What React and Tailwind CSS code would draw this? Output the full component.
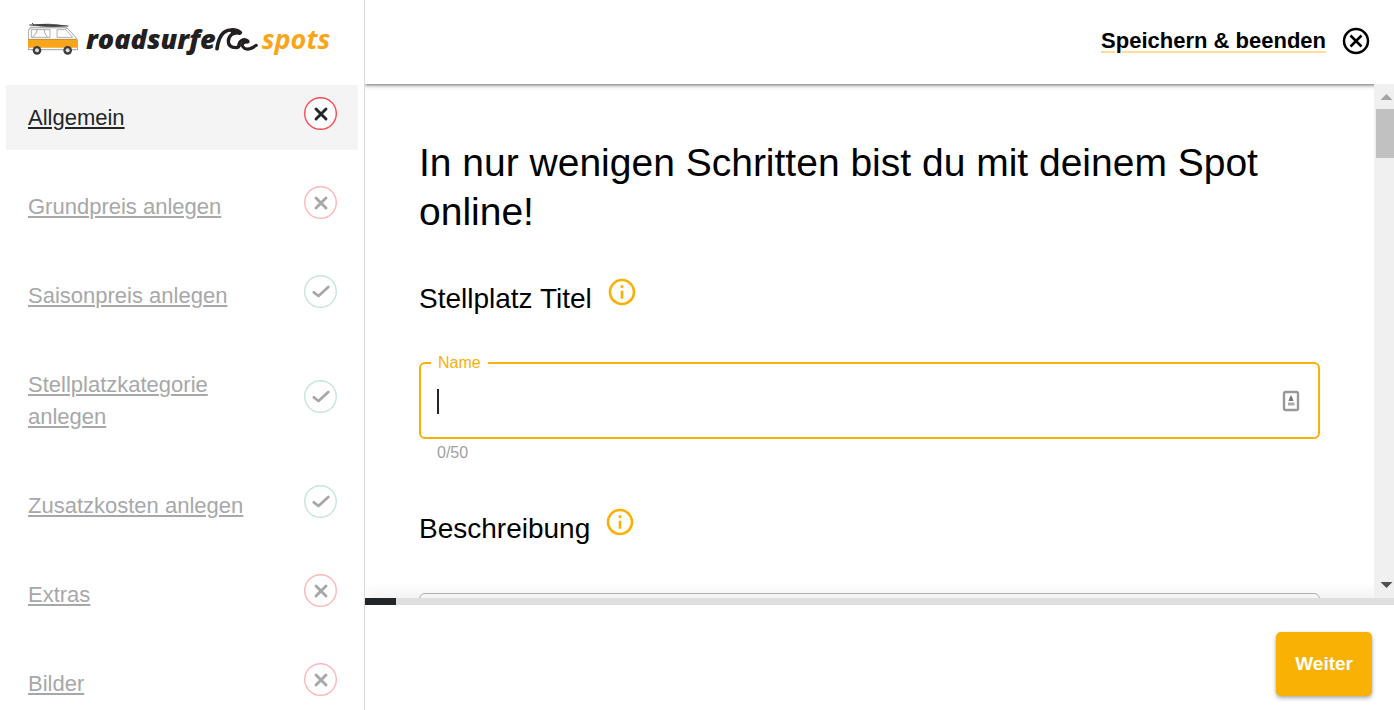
import React, { useState } from "react";

const STEPS = [
  { label: "Allgemein", done: false, active: true },
  { label: "Grundpreis anlegen", done: false },
  { label: "Saisonpreis anlegen", done: true },
  { label: "Stellplatzkategorie anlegen", done: true },
  { label: "Zusatzkosten anlegen", done: true },
  { label: "Extras", done: false },
  { label: "Bilder", done: false },
];

function VanIcon() {
  return (
    <svg viewBox="0 0 150 96" className="h-8 w-[50px] shrink-0" aria-hidden="true">
      <path d="M1 48 V26 Q1 16 10 14 H112 Q120 15 126 24 L144 44 Q149 50 149 60 V80 H1 Z" fill="#fff" stroke="#8a8a8a" strokeWidth="2.500" />
      <path d="M8 11 H116 L120 16 H4 Z" fill="#b5b5b5" />
      <path d="M0 49 H145 Q149 54 149 62 V74 H0 Z" fill="#f9a51a" />
      <path d="M10 20 H66 V43 H10 Z M87 20 H114 L134 43 H87 Z" fill="#fff" stroke="#888" strokeWidth="2" />
      <path d="M28 20 Q26 33 14 42 M48 20 Q50 34 58 42" fill="none" stroke="#777" strokeWidth="2" />
      <path d="M4 6 Q60 -1 121 9 Q60 14 4 6 Z" fill="#444" stroke="#333" strokeWidth="1.500" />
      <path d="M12 0 L18 6" stroke="#444" strokeWidth="3" />
      <path d="M2 49 H145" stroke="#9a7433" strokeWidth="2" />
      <circle cx="27" cy="82" r="13" fill="#3d3d3d" />
      <circle cx="27" cy="82" r="6" fill="#ddd" />
      <circle cx="119" cy="82" r="13" fill="#3d3d3d" />
      <circle cx="119" cy="82" r="6" fill="#ddd" />
    </svg>
  );
}

function WaveIcon() {
  return (
    <svg viewBox="0 -4 138 96" className="-ml-[2px] h-8 w-[46px] shrink-0" aria-hidden="true">
      <g fill="none" stroke="#231f20" strokeLinecap="round" strokeLinejoin="round">
        <path d="M9 73 C13 44 22 18 50 17 C62 16 72 19 79 25" strokeWidth="11" />
        <path d="M76 26 C56 22 43 36 43 51 C43 65 52 70 66 70 C72 70 75 68 75 63" strokeWidth="10" />
        <path d="M75 64 C75 50 89 41 101 50" strokeWidth="10" />
        <path d="M99 53 C87 53 82 61 87 68 C96 79 113 73 127 63" strokeWidth="9" />
      </g>
      <path d="M48 19 L81 21 Q86 28 77 32 Q66 26 54 32 Z M88 44 Q104 42 107 52 Q106 58 100 57 Q92 52 84 60 Z" fill="#231f20" />
    </svg>
  );
}

function StatusIcon({ done, active }) {
  const ring = done ? "#c5e6df" : active ? "#fb4b52" : "#fdb7ba";
  return (
    <svg viewBox="0 0 33 33" className="size-[33px] shrink-0" fill="none" strokeLinecap="round" strokeLinejoin="round" aria-hidden="true">
      <circle cx="16.500" cy="16.500" r="15.800" fill="#fff" stroke={ring} strokeWidth="1.400" />
      {done ? (
        <path d="M9.800 17.300 L14.500 21 L24.300 12" stroke="#a7a8a9" strokeWidth="2.800" />
      ) : (
        <path d="M12 12 L22 22 M22 12 L12 22" stroke={active ? "#222628" : "#a7a8a9"} strokeWidth="2.900" />
      )}
    </svg>
  );
}

function InfoButton({ label }) {
  return (
    <button type="button" aria-label={label} className="-mt-[14px] size-8">
      <svg viewBox="0 0 24 24" className="size-8" fill="#f9b104" aria-hidden="true">
        <path d="M11 7h2v2h-2zm0 4h2v6h-2zm1-9C6.480 2 2 6.480 2 12s4.480 10 10 10 10-4.480 10-10S17.520 2 12 2zm0 18c-4.410 0-8-3.590-8-8s3.590-8 8-8 8 3.590 8 8-3.590 8-8 8z" />
      </svg>
    </button>
  );
}

function ContactIcon() {
  return (
    <svg viewBox="0 0 18 22" className="h-[22px] w-[18px] shrink-0" aria-hidden="true">
      <rect x="2" y="2" width="14" height="18" rx="1.500" fill="#fff" stroke="#999" strokeWidth="2.400" />
      <path d="M9 5 L10.500 8 L11.500 11 H6.500 L7.500 8 Z" fill="#777" />
      <rect x="6" y="12.500" width="6.500" height="3" fill="#aaa" />
    </svg>
  );
}

function Sidebar() {
  return (
    <aside className="relative z-20 flex w-[365px] shrink-0 flex-col border-r border-[#dcdcdc] bg-white">
      <a href="#start" className="flex h-[85px] shrink-0 items-center pb-2 pl-7" aria-label="roadsurfer spots">
        <VanIcon />
        <span className="ml-2 font-['Open_Sans',sans-serif] text-[27px] leading-8 font-extrabold text-[#231f20] italic">roadsurfe</span>
        <WaveIcon />
        <span className="ml-[2px] font-['Open_Sans',sans-serif] text-[27px] leading-8 font-bold text-[#f9a51a] italic">spots</span>
      </a>
      <nav>
        <ul className="flex flex-col gap-6 px-[6px]">
          {STEPS.map((s) => (
            <li key={s.label} className={"flex items-center justify-between pr-[21px] pl-[22px] " + (s.active ? "bg-[#f4f4f4]" : "")}>
              <a
                href="#schritt"
                className={"mt-[17px] mb-4 max-w-[230px] text-[22px] leading-8 underline decoration-2 underline-offset-2 " + (s.active ? "text-[#222628]" : "text-[#a7a8a9]")}
              >
                {s.label}
              </a>
              <span className="mb-[9px]">
                <StatusIcon done={s.done} active={s.active} />
              </span>
            </li>
          ))}
        </ul>
      </nav>
    </aside>
  );
}

function Scrollbar() {
  return (
    <div className="relative z-20 flex w-5 shrink-0 flex-col bg-[#f0f0f0] pl-[2px]" aria-hidden="true">
      <svg viewBox="0 0 18 25" className="h-[25px] w-full shrink-0">
        <path d="M4.500 16 L10.500 10 L16.500 16 Z" fill="#a3a3a3" />
      </svg>
      <div className="h-[49px] bg-[#c1c1c1]" />
      <div className="grow" />
      <svg viewBox="0 0 18 25" className="h-[25px] w-full shrink-0">
        <path d="M4.500 9 L16.500 9 L10.500 15 Z" fill="#505050" />
      </svg>
    </div>
  );
}

export default function App() {
  const [name, setName] = useState("");
  return (
    <div className="flex h-screen overflow-hidden bg-white font-['Liberation_Sans',Arial,sans-serif] text-black">
      <Sidebar />
      <div className="flex min-w-0 grow flex-col">
        <header className="relative z-10 flex h-[84px] shrink-0 items-center justify-end gap-4 bg-white pr-[24px] pb-[3px] shadow-[0_1px_3px_rgba(0,0,0,0.5),0_3px_5px_rgba(0,0,0,0.1)]">
          <a href="#beenden" className="text-[22px] leading-7 font-bold underline decoration-[#fddc98] decoration-2 underline-offset-3">
            Speichern &amp; beenden
          </a>
          <button type="button" aria-label="Schließen">
            <svg viewBox="0 0 28 28" className="size-7" fill="none" stroke="#000" strokeWidth="2.500" aria-hidden="true">
              <circle cx="14" cy="14" r="12" />
              <path d="M8.500 8.500 L19.500 19.500 M19.500 8.500 L8.500 19.500" />
            </svg>
          </button>
        </header>
        <div className="flex min-h-0 grow">
          <main className="min-w-0 grow overflow-hidden px-[54px] pt-[54px]">
            <h1 className="text-[39px] leading-[49px]">In nur wenigen Schritten bist du mit deinem Spot online!</h1>
            <div className="mt-[45px] flex items-center gap-[14px]">
              <h2 className="text-[28px] leading-9">Stellplatz Titel</h2>
              <InfoButton label="Info zum Titel" />
            </div>
            <fieldset className="mt-9 flex h-[86px] items-start rounded-[6px] border-2 border-[#f9b104] pr-[18px] pl-4">
              <legend className="-ml-[6px] px-[7px] text-[16px] leading-5 text-[#f9b104]">
                <label htmlFor="name">Name</label>
              </legend>
              <div className="flex grow items-center pt-2">
                <span className="h-[25px] w-[2px] bg-[#222628]" aria-hidden="true" />
                <input
                  id="name"
                  maxLength={50}
                  value={name}
                  onChange={(e) => setName(e.target.value)}
                  className="h-10 min-w-0 grow text-[22px] caret-transparent outline-none"
                />
                <ContactIcon />
              </div>
            </fieldset>
            <p className="mt-1 pl-[18px] text-[16px] leading-5 text-[#a0a1a2]">{name.length}/50</p>
            <div className="mt-12 flex items-center gap-[14px]">
              <h2 className="text-[28px] leading-9">Beschreibung</h2>
              <InfoButton label="Info zur Beschreibung" />
            </div>
            <textarea aria-label="Beschreibung" className="mt-[46px] h-40 w-full resize-none rounded-[6px] border border-[#b5b5b5] p-4 text-[22px] outline-none" />
          </main>
          <Scrollbar />
        </div>
        <div role="progressbar" aria-label="Fortschritt" aria-valuenow={3} className="h-[7px] shrink-0 bg-[#dfdfdf] shadow-[0_-2px_16px_rgba(0,0,0,0.12)]">
          <div className="h-full w-[3%] bg-[#222628]" />
        </div>
        <footer className="relative flex h-[105px] shrink-0 items-start justify-end bg-white pt-[27px] pr-[22px]">
          <button type="button" className="h-16 rounded-[5px] bg-[#f9b104] px-[19px] text-[19px] font-bold text-white shadow-[0_2px_4px_rgba(0,0,0,0.35)]">
            Weiter
          </button>
        </footer>
      </div>
    </div>
  );
}
